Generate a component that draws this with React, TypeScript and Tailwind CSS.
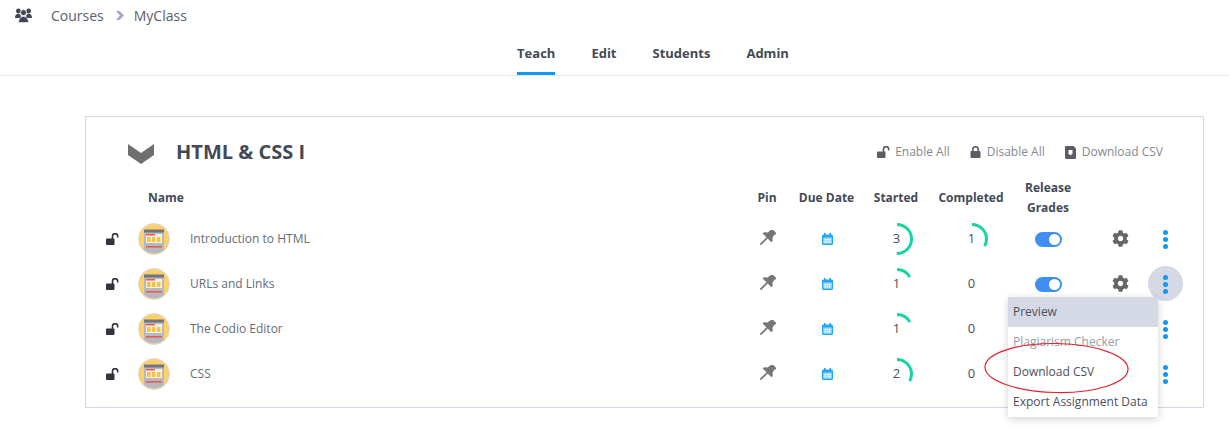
import { FaCog } from "react-icons/fa";

const rows = [
  { name: "Introduction to HTML", started: 3, startedPct: 50, completed: 1, completedPct: 33, toggle: true, gear: true },
  { name: "URLs and Links", started: 1, startedPct: 17, completed: 0, completedPct: 0, toggle: true, gear: true, open: true },
  { name: "The Codio Editor", started: 1, startedPct: 17, completed: 0, completedPct: 0 },
  { name: "CSS", started: 2, startedPct: 33, completed: 0, completedPct: 0 },
];

const gridCols = "grid grid-cols-[38px_52px_557px_40px_79px_60px_90px_64px_67px_36px] items-center pl-[14px]";

function UsersIcon() {
  return (
    <svg width="17" height="15" viewBox="0 0 17 15" fill="#3f4552">
      <circle cx="3.4" cy="3" r="2.4" />
      <circle cx="13.6" cy="3" r="2.4" />
      <path d="M0 10C0 7 1.5 5.8 3.4 5.8c.8 0 1.4.2 2 .6L6 10H0zM17 10c0-3-1.5-4.2-3.4-4.2-.8 0-1.4.2-2 .6L11 10h6z" />
      <circle cx="8.5" cy="4.6" r="3" stroke="#fff" strokeWidth="0.8" />
      <path d="M3.6 14.5c0-3.6 2-6 4.9-6s4.9 2.4 4.9 6H3.6z" stroke="#fff" strokeWidth="0.6" />
    </svg>
  );
}

function UnlockIcon({ color }: { color: string }) {
  return (
    <svg width="13" height="12" viewBox="0 0 13 12" fill="none">
      <rect x="0" y="5.5" width="8.5" height="6.5" rx="1" fill={color} />
      <path d="M6.5 6V3.2a2.6 2.6 0 0 1 5.2 0V4.6" stroke={color} strokeWidth="1.6" />
    </svg>
  );
}

function LockIcon() {
  return (
    <svg width="11" height="12" viewBox="0 0 11 12" fill="none" className="ml-[20px]">
      <rect x="0.5" y="5" width="10" height="7" rx="1" fill="#5a5d64" />
      <path d="M2.8 5.5V3.5a2.7 2.7 0 0 1 5.4 0v2" stroke="#5a5d64" strokeWidth="1.6" />
    </svg>
  );
}

function PinIcon() {
  return (
    <svg width="18" height="17" viewBox="0 0 18 17" fill="#777">
      <g transform="translate(11.5 5.5) rotate(45)">
        <path d="M-4-6.5H4v1.6H2.9l.7 4.2 2.6 2.4v1.8H-6.2V1.7l2.6-2.4.7-4.2H-4z" />
        <rect x="-0.9" y="3" width="1.8" height="10" />
      </g>
    </svg>
  );
}

function CalendarIcon() {
  return (
    <svg width="11" height="12" viewBox="0 0 11 12">
      <rect x="0" y="1.5" width="11" height="10.5" rx="1.5" fill="#23a5f7" />
      <rect x="2" y="0" width="1.6" height="3" fill="#23a5f7" />
      <rect x="7.4" y="0" width="1.6" height="3" fill="#23a5f7" />
      <rect x="1.2" y="4.5" width="8.6" height="6.2" fill="#9fd6fb" />
      <path d="M2.5 6h1.5v1.3H2.5zM4.8 6h1.5v1.3H4.8zM7 6h1.5v1.3H7zM2.5 8.2h1.5v1.3H2.5zM4.8 8.2h1.5v1.3H4.8zM7 8.2h1.5v1.3H7z" fill="#fff" />
    </svg>
  );
}

function Avatar() {
  return (
    <svg width="32" height="32" viewBox="0 0 32 32">
      <circle cx="16" cy="16" r="15.5" fill="#fdd06a" stroke="#d5d8e5" />
      <path d="M6 8h20v18.5a15 15 0 0 1-20 0V8z" fill="#b4b8c0" />
      <rect x="6" y="6.5" width="20" height="3" fill="#6f7480" />
      <rect x="8" y="11" width="16" height="9" fill="#f7f1e3" />
      <rect x="8" y="11" width="9" height="1.5" fill="#ef5a50" />
      <rect x="9" y="14" width="3.5" height="5" fill="#f9c23c" />
      <rect x="14" y="14" width="3.5" height="5" fill="#f9c23c" />
      <rect x="19" y="14" width="3.5" height="5" fill="#f9c23c" />
      <rect x="8" y="23" width="16" height="1.6" fill="#ef5a50" />
    </svg>
  );
}

function Progress({ value, pct }: { value: number; pct: number }) {
  const r = 14.5;
  const c = 2 * Math.PI * r;
  return (
    <div className="relative w-[34px] h-[34px] flex items-center justify-center text-[13px] text-[#4a505c]">
      {pct > 0 && (
        <svg width="34" height="34" viewBox="0 0 34 34" className="absolute left-[1px] top-0 -rotate-90">
          <circle
            cx="17"
            cy="17"
            r={r}
            fill="none"
            stroke="#17d4a4"
            strokeWidth="3"
            strokeDasharray={`${(c * pct) / 100} ${c}`}
          />
        </svg>
      )}
      <span className="ml-[1px]">{value}</span>
    </div>
  );
}

function Dots() {
  return (
    <div className="flex flex-col gap-[2px] ml-[1px] mt-[2px]">
      <span className="w-[5px] h-[5px] rounded-full bg-[#0f9bf5]" />
      <span className="w-[5px] h-[5px] rounded-full bg-[#0f9bf5]" />
      <span className="w-[5px] h-[5px] rounded-full bg-[#0f9bf5]" />
    </div>
  );
}

function Toggle() {
  return (
    <div className="w-[27px] h-[15px] mt-[2px] rounded-full bg-[#3f8ef0] flex items-center justify-end pr-[2px]">
      <span className="w-[11px] h-[11px] rounded-full bg-white" />
    </div>
  );
}

function Menu() {
  return (
    <div className="absolute left-[-139px] top-[31px] w-[150px] bg-white shadow-[0_2px_8px_rgba(0,0,0,0.18)] text-[12px] z-10">
      <div className="h-[30px] flex items-center px-[5px] bg-[#d5d8e5] text-[#4a505c]">Preview</div>
      <div className="h-[30px] flex items-center px-[5px] text-[#9a9da5]">Plagiarism Checker</div>
      <div className="h-[30px] flex items-center px-[5px] text-[#4a505c]">Download CSV</div>
      <div className="h-[30px] flex items-center px-[5px] text-[#4a505c]">Export Assignment Data</div>
      <svg width="150" height="54" viewBox="0 0 150 54" className="absolute left-[-24px] top-[45px] overflow-visible">
        <ellipse cx="72.5" cy="26" rx="71.5" ry="24.5" fill="none" stroke="#e0242c" strokeWidth="1.2" transform="rotate(1 72 26)" />
      </svg>
    </div>
  );
}

export default function App() {
  return (
    <div className="min-h-[429px] bg-white font-['Open_Sans',sans-serif] overflow-hidden">
      <div className="h-[76px] border-b border-[#e8e8ec]">
        <div className="h-[30px] pl-[15px] flex items-center">
          <UsersIcon />
          <span className="ml-[19px] text-[14px] text-[#5a6070]">Courses</span>
          <svg width="8" height="9" viewBox="0 0 8 9" className="ml-[12px]" fill="#a3a8c4">
            <path d="M0 0h3.5L8 4.5 3.5 9H0l4-4.5z" />
          </svg>
          <span className="ml-[10px] text-[14px] text-[#5a6070]">MyClass</span>
        </div>
        <div className="h-[45px] pt-[5px] pl-[77px] flex justify-center gap-[36px] text-[13px] font-bold text-[#434a56]">
          <div className="h-[40px] pt-[9px] border-b-[3px] border-[#0f9bf5]">Teach</div>
          <div className="pt-[9px]">Edit</div>
          <div className="pt-[9px]">Students</div>
          <div className="pt-[9px]">Admin</div>
        </div>
      </div>

      <div className="mt-[40px] ml-[85px] mr-[25px] h-[292px] border border-[#d5d7e4]">
        <div className="h-[61px] pt-[9px] flex items-center pl-[42px] pr-[40px]">
          <svg width="26" height="20" viewBox="0 0 26 20" fill="#6f6f6f" className="mt-[4px]">
            <path d="M0 0l13 9L26 0v11l-13 9L0 11z" />
          </svg>
          <span className="ml-[22px] text-[20px] font-bold text-[#434a56]">HTML &amp; CSS I</span>
          <div className="ml-auto flex items-center text-[12px] text-[#85888f]">
            <UnlockIcon color="#5a5d64" />
            <span className="ml-[5px]">Enable All</span>
            <LockIcon />
            <span className="ml-[6px]">Disable All</span>
            <svg width="12" height="13" viewBox="0 0 12 13" className="ml-[20px]" fill="#5a5d64">
              <path d="M1 0h7.5L11 2.5v9a1.5 1.5 0 0 1-1.5 1.5h-8A1.5 1.5 0 0 1 0 11.5V1a1 1 0 0 1 1-1z" />
              <path d="M3.5 4h4v3.5L5.5 9.5 3.5 7.5z" fill="#fff" />
            </svg>
            <span className="ml-[5px]">Download CSV</span>
          </div>
        </div>

        <div className={`${gridCols} h-[38px] text-[12px] font-bold text-[#434a56] text-center`}>
          <div />
          <div className="col-span-2 text-left pl-[10px]">Name</div>
          <div>Pin</div>
          <div>Due Date</div>
          <div>Started</div>
          <div>Completed</div>
          <div className="leading-[20px]">Release Grades</div>
        </div>

        {rows.map((row) => (
          <div key={row.name} className={`${gridCols} h-[45px]`}>
            <div className="flex pl-[6px]">
              <UnlockIcon color="#2f343d" />
            </div>
            <Avatar />
            <div className="text-[12px] text-[#666b78]">{row.name}</div>
            <div className="flex justify-center">
              <PinIcon />
            </div>
            <div className="flex justify-center pl-[1px]">
              <CalendarIcon />
            </div>
            <div className="flex justify-center">
              <Progress value={row.started} pct={row.startedPct} />
            </div>
            <div className="flex justify-center">
              <Progress value={row.completed} pct={row.completedPct} />
            </div>
            <div className="flex justify-center">{row.toggle && <Toggle />}</div>
            <div className="flex justify-center pl-[13px]">
              {row.gear && <FaCog className="w-[17px] h-[17px] text-[#666]" />}
            </div>
            <div className="relative flex justify-center">
              <div className={`w-[35px] h-[35px] rounded-full flex items-center justify-center ${row.open ? "bg-[#d5d8e5]" : ""}`}>
                <Dots />
              </div>
              {row.open && <Menu />}
            </div>
          </div>
        ))}
      </div>
    </div>
  );
}
